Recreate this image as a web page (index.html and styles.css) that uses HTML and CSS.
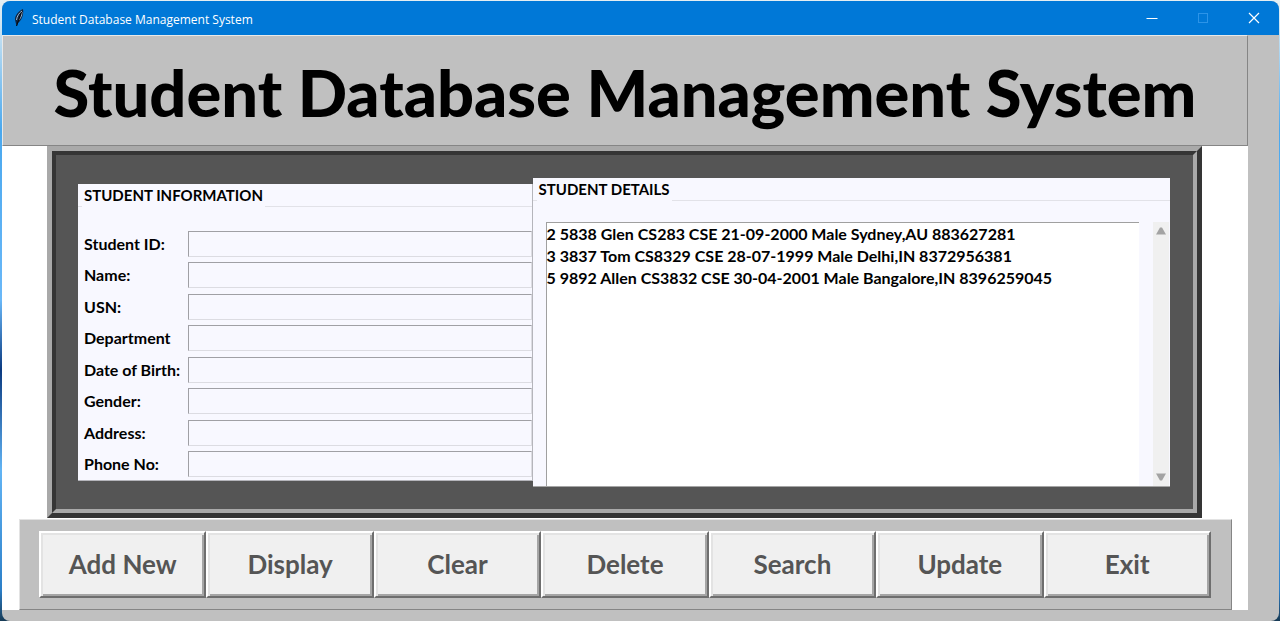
FILE: index.html
```html
<!DOCTYPE html>
<html lang="en">
<head>
<meta charset="utf-8">
<title>Student Database Management System</title>
<link rel="stylesheet" href="styles.css">
</head>
<body>
<div class="window">
  <header class="titlebar">
    <svg class="app-icon" width="14" height="20" viewBox="0 0 14 20" aria-hidden="true">
      <path d="M11 1C7 3 3 7 3 11.500L4 16L5 18L6 15C10 12 12 6 11 1Z" fill="#10233d"/>
      <path d="M10 3C7 5 5 8 4.500 12M10 4C10 8 8 11 6 13" fill="none" stroke="#9db9d6" stroke-width="1"/>
      <path d="M9.500 4L4.500 18" stroke="#05080d" stroke-width="1"/>
    </svg>
    <span class="caption">Student Database Management System</span>
    <button class="win-btn" type="button" aria-label="Minimize"><svg width="12" height="12" viewBox="0 0 12 12"><path d="M.5 6.500H11.500" stroke="#fff"/></svg></button>
    <button class="win-btn" type="button" aria-label="Maximize" disabled><svg width="12" height="12" viewBox="0 0 12 12"><rect x="1.500" y="1.500" width="9" height="9" fill="none" stroke="#2c94e8"/></svg></button>
    <button class="win-btn" type="button" aria-label="Close"><svg width="12" height="12" viewBox="0 0 12 12"><path d="M1 1L11 11M11 1L1 11" stroke="#fff" stroke-width="1.200"/></svg></button>
  </header>
  <main class="client">
    <div class="heading"><h1>Student Database Management System</h1></div>
    <div class="panel">
      <div class="panel-inner">
        <section class="frame info">
          <h2>STUDENT INFORMATION</h2>
          <form class="fields">
            <label for="sid">Student ID:</label><input id="sid" type="text">
            <label for="name">Name:</label><input id="name" type="text">
            <label for="usn">USN:</label><input id="usn" type="text">
            <label for="dept">Department</label><input id="dept" type="text">
            <label for="dob">Date of Birth:</label><input id="dob" type="text">
            <label for="gender">Gender:</label><input id="gender" type="text">
            <label for="address">Address:</label><input id="address" type="text">
            <label for="phone">Phone No:</label><input id="phone" type="text">
          </form>
        </section>
        <section class="frame details">
          <h2>STUDENT DETAILS</h2>
          <div class="list-area">
            <ul class="list">
              <li>2 5838 Glen CS283 CSE 21-09-2000 Male Sydney,AU 883627281</li>
              <li>3 3837 Tom CS8329 CSE 28-07-1999 Male Delhi,IN 8372956381</li>
              <li>5 9892 Allen CS3832 CSE 30-04-2001 Male Bangalore,IN 8396259045</li>
            </ul>
            <div class="scrollbar" aria-hidden="true">
              <svg width="10" height="8" viewBox="0 0 10 8"><path d="M4 .5H6L10 7.500H0Z" fill="#a3a3a3"/></svg>
              <svg width="10" height="8" viewBox="0 0 10 8"><path d="M4 7.500H6L10 .5H0Z" fill="#a3a3a3"/></svg>
            </div>
          </div>
        </section>
      </div>
    </div>
    <div class="actions">
      <button type="button">Add New</button>
      <button type="button">Display</button>
      <button type="button">Clear</button>
      <button type="button">Delete</button>
      <button type="button">Search</button>
      <button type="button">Update</button>
      <button type="button">Exit</button>
    </div>
  </main>
</div>
</body>
</html>
```
FILE: styles.css
```css
* { box-sizing: border-box; }
body {
  margin: 0;
  padding: 1px 1px 0 2px;
  min-height: 100vh;
  display: flex;
  background: linear-gradient(#e4eef2 0, #d5e8f2 20px, #4aa8ee 130px, #6ab8f8 300px, #0b3a80 370px, #62b4f4 470px, #2c7fc8 590px, #173a55 100%);
  font-family: Lato, Carlito, Calibri, sans-serif;
  font-weight: 700;
  color: #000;
}
.window {
  flex: 1;
  display: flex;
  flex-direction: column;
  background: #c0c0c0;
  border-radius: 8px;
  overflow: hidden;
}
.titlebar {
  display: flex;
  align-items: center;
  height: 34px;
  padding-left: 10px;
  background: #0078d7;
  color: #fff;
}
.caption {
  flex: 1;
  margin-left: 6px;
  padding-top: 2px;
  font: 400 12px "Open Sans", "Noto Sans", sans-serif;
}
.win-btn {
  display: flex;
  justify-content: center;
  align-items: center;
  width: 51px;
  height: 34px;
  padding: 0;
  border: 0;
  background: none;
}
.client {
  margin-right: 31px;
  background: #fff;
}
.heading {
  padding: 14px 0 10px;
  border: 1px solid;
  border-color: #e9e9e9 #858585 #858585 #e9e9e9;
  background: #c0c0c0;
  text-align: center;
}
h1 {
  margin: 0;
  font-size: 65px;
  font-weight: 900;
  line-height: 85px;
  white-space: nowrap;
}
.panel {
  margin: 0 46px 0 45px;
  border: 5px solid;
  border-color: #a9a9a9 #353535 #353535 #a9a9a9;
}
.panel-inner {
  display: flex;
  align-items: flex-start;
  padding: 23px 23px 22px 22px;
  border: 4px solid;
  border-color: #353535 #a9a9a9 #a9a9a9 #353535;
  background: #555;
}
.frame { background: #f8f8ff; }
h2 {
  display: flex;
  margin: 0;
  font-size: 15px;
  line-height: 23px;
  white-space: nowrap;
}
.info {
  flex: 454 1 0;
  margin-top: 6px;
  border-right: 1px solid #b5b5bb;
  border-bottom: 1px solid #b5b5bb;
}
h2::before, h2::after {
  content: "";
  width: 4px;
  margin-right: 2px;
  border-bottom: 1px solid #e2e2e8;
}
h2::after { flex: 1; margin: 0 0 0 2px; }
.fields {
  display: grid;
  grid-template-columns: 104px 1fr;
  grid-template-rows: repeat(8, 1fr);
  align-items: center;
  height: 252px;
  margin-top: 21px;
  padding-left: 6px;
  font-size: 16px;
  line-height: 20px;
}
.fields input {
  width: 100%;
  height: 26px;
  border: 1px solid;
  border-color: #a0a0a5 #dcdce2 #dcdce2 #a0a0a5;
  background: #f8f8ff;
  font: inherit;
}
.details {
  flex: 638 1 0;
  border-bottom: 1px solid #a5a5a5;
}
.list-area {
  display: flex;
  height: 264px;
  margin: 21px 1px 0 13px;
}
.list {
  flex: 1;
  margin: 0 14px 0 0;
  padding: 0;
  list-style: none;
  border-top: 1px solid #a0a0a0;
  border-left: 1px solid #a0a0a0;
  background: #fff;
  font-size: 16px;
  line-height: 22px;
}
.scrollbar {
  display: flex;
  flex-direction: column;
  justify-content: space-between;
  align-items: center;
  width: 16px;
  padding: 5px 0;
  background: #f0f0f0;
}
.actions {
  display: flex;
  margin: 1px 16px 0 17px;
  padding: 11px 20px 11px 19px;
  border: 1px solid;
  border-color: #e3e3e3 #858585 #858585 #e3e3e3;
  background: #c0c0c0;
}
.actions button {
  flex: 1;
  height: 67px;
  padding: 0 0 2px;
  border: 2px solid;
  border-color: #fff #6e6e6e #6e6e6e #fff;
  box-shadow: inset 2px 2px #e3e3e3, inset -2px -2px #a5a5a5;
  background: #f0f0f0;
  color: #555;
  font: inherit;
  font-size: 26px;
}
```
